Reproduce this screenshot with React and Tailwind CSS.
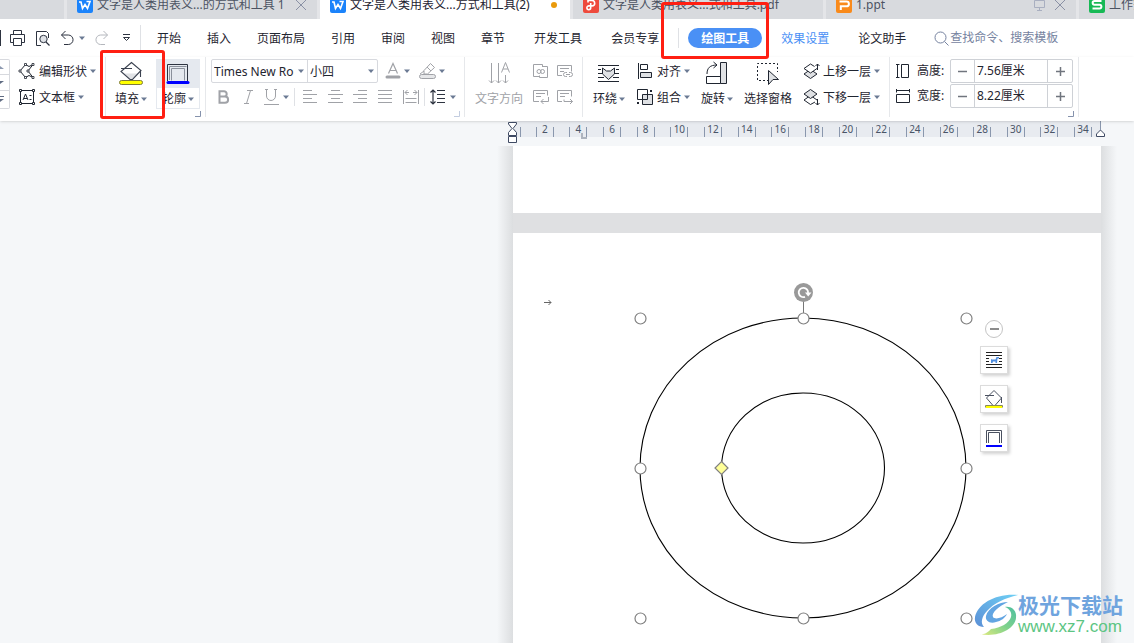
import React from "react";

const tabs = [
  { kind: "w", title: "文字是人类用表义...的方式和工具 1", close: true },
  { kind: "w", title: "文字是人类用表义...方式和工具(2)", active: true },
  { kind: "pdf", title: "文字是人类用表义...式和工具.pdf" },
  { kind: "ppt", title: "1.ppt", close: true, screen: true },
  { kind: "s", title: "工作簿1" },
];

const menus = ["开始", "插入", "页面布局", "引用", "审阅", "视图", "章节"];
const rulerMarks = [2, 4, 6, 8, 10, 12, 14, 16, 18, 20, 22, 24, 26, 28, 30, 32, 34];

function Svg({ w = 16, h = 16, className = "", children }) {
  return (
    <svg
      width={w}
      height={h}
      viewBox={`0 0 ${w} ${h}`}
      fill="none"
      stroke="currentColor"
      aria-hidden="true"
      className={`shrink-0 overflow-visible ${className}`}
    >
      {children}
    </svg>
  );
}

function Caret() {
  return (
    <Svg w={6} h={4} className="text-[#6b7a94]">
      <path d="M0 0.500h6L3 4z" fill="currentColor" stroke="none" />
    </Svg>
  );
}

function FileIcon({ kind }) {
  if (kind === "w") {
    return (
      <Svg>
        <rect width="16" height="16" rx="2" fill="#1b83fb" stroke="none" />
        <path d="M2 5h2l1.500 6.500 2.500-4 2.500 4L13 4.500H9.500" stroke="#fff" strokeWidth="1.600" />
      </Svg>
    );
  }
  if (kind === "pdf") {
    return (
      <Svg>
        <rect width="16" height="16" rx="2" fill="#ee4a3d" stroke="none" />
        <path
          d="M5 5.500V3.500h4a2.700 2.700 0 0 1 0 5.400H5.800a1.900 1.900 0 1 0 1.900 1.900V6"
          stroke="#fff"
          strokeWidth="1.600"
        />
      </Svg>
    );
  }
  if (kind === "ppt") {
    return (
      <Svg>
        <rect width="16" height="16" rx="2" fill="#f98a1b" stroke="none" />
        <path d="M3.500 4.500h7a2.200 2.200 0 0 1 0 4.800H4.800V13" stroke="#fff" strokeWidth="2" />
      </Svg>
    );
  }
  return (
    <Svg>
      <rect width="16" height="16" rx="2" fill="#17b955" stroke="none" />
      <path d="M12.500 4H5.500a1.800 1.800 0 0 0 0 3.700h5a1.900 1.900 0 0 1 0 3.800H3.500" stroke="#fff" strokeWidth="2" />
    </Svg>
  );
}

function FillIcon() {
  return (
    <Svg w={24} h={24}>
      <path d="M4 12.500h15l-7 6.500z" fill="#e0e2e5" stroke="none" />
      <path d="M12.500 1.500L2 10.500l9 8h2.500L22 9.500zM2 7.500h11M21.500 9v7" stroke="#3b4250" strokeWidth="1.100" />
      <rect x="0.500" y="19.500" width="23" height="4" rx="2" fill="#ff0" stroke="#7d7a3a" />
    </Svg>
  );
}

function OutlineIcon() {
  return (
    <Svg w={24} h={24}>
      <path d="M1.500 19V2.500h20V19" stroke="#2d3340" />
      <path d="M5.500 18.500V6.500h13v12M3.500 18V4.500h17" stroke="#8a909b" />
      <path d="M2 20.500h20" stroke="#00f" strokeWidth="3" strokeLinecap="round" />
    </Svg>
  );
}

function BigButton({ icon, label, caret = true, className = "" }) {
  return (
    <button type="button" className={`flex flex-col items-center pt-1 ${className}`}>
      <span className="flex h-6 items-center justify-center">{icon}</span>
      <span className="flex h-7 items-center gap-[2px] whitespace-nowrap">
        {label}
        {caret && <Caret />}
      </span>
    </button>
  );
}

function SmallButton({ icon, label }) {
  return (
    <button type="button" className="flex h-[26px] items-center gap-[3px] whitespace-nowrap">
      {icon}
      <span className="pt-[2px]">{label}</span>
      <Caret />
    </button>
  );
}

function IconButton({ label, children, className = "" }) {
  return (
    <button type="button" aria-label={label} className={`flex h-[26px] items-center justify-center ${className}`}>
      {children}
    </button>
  );
}

function Group({ children, launcher, className = "" }) {
  return (
    <div className={`relative flex shrink-0 items-start border-r border-[#e6e8eb] ${className}`}>
      {children}
      {launcher && (
        <button type="button" aria-label="更多选项" className="absolute right-1 bottom-0">
          <Svg w={6} h={6} className={launcher}>
            <path d="M0 5.500h5.500V0" />
          </Svg>
        </button>
      )}
    </div>
  );
}

function TabBar() {
  return (
    <div className="flex h-[19px] items-end gap-[3px] overflow-hidden bg-[#e4e5e8] text-[#4c5362]">
      <div className="h-7 w-16 shrink-0 bg-[#d8dade]" />
      {tabs.map((tab) => (
        <div
          key={tab.title}
          className={`flex h-7 w-[250px] shrink-0 items-center gap-1 pr-[10px] pl-[10px] whitespace-nowrap ${
            tab.active ? "bg-white text-[#1c2230]" : "bg-[#d8dade]"
          }`}
        >
          <FileIcon kind={tab.kind} />
          <span className="grow">{tab.title}</span>
          {tab.active && <span className="mr-[3px] h-[6px] w-[6px] rounded-full bg-[#e99a0c]" />}
          {tab.screen && (
            <Svg w={12} h={12} className="mr-1 text-[#a9afc0]">
              <path d="M0.500 1.500h10v7h-10zM5.500 9v2M3 11.500h5" />
            </Svg>
          )}
          {tab.close && (
            <button type="button" aria-label="关闭">
              <Svg w={12} h={12} className="text-[#8a91a5]">
                <path d="M1 1l10 10M11 1L1 11" />
              </Svg>
            </button>
          )}
        </div>
      ))}
    </div>
  );
}

function QuickAccess() {
  return (
    <div className="flex w-[141px] shrink-0 items-center border-r border-[#dfe1e5] text-[#2d3340]">
      <span className="h-4 w-px bg-[#2d3340]" />
      <IconButton label="打印" className="ml-2">
        <Svg w={17} h={16}>
          <path d="M4.500 4.500v-4h8v4M4 12.500H1.500v-8h14v8H13M4.500 8.500h8v7h-8z" />
        </Svg>
      </IconButton>
      <IconButton label="打印预览" className="ml-[9px]">
        <Svg w={16} h={17}>
          <path d="M6 15.500H1.500v-14h10l2 2V8" />
          <circle cx="8.500" cy="9" r="3.700" fill="#dfe2e7" />
          <path d="M11 12l3.500 3.500" strokeWidth="1.200" />
        </Svg>
      </IconButton>
      <IconButton label="撤销" className="ml-[9px] gap-[5px]">
        <Svg w={14} h={16}>
          <path d="M5.500 1L1.500 5l4 4M1.500 5h6.800a4.700 4.700 0 0 1 0 9.500H4" />
        </Svg>
        <Caret />
      </IconButton>
      <IconButton label="恢复" className="ml-[10px] text-[#b4b7bd]">
        <Svg w={14} h={16}>
          <path d="M8.500 1l4 4-4 4M12.500 5H5.700a4.700 4.700 0 0 0 0 9.500H10" />
        </Svg>
      </IconButton>
      <IconButton label="自定义" className="ml-[13px]">
        <Svg w={9} h={8}>
          <path d="M1 0.500h7M1.500 3.500h6l-3 3z" />
        </Svg>
      </IconButton>
    </div>
  );
}

function MenuBar() {
  return (
    <div className="flex h-[38px] items-center overflow-hidden whitespace-nowrap">
      <div className="flex h-[22px] items-center">
        <QuickAccess />
      </div>
      <nav className="flex items-center pl-[3px]">
        {menus.map((name) => (
          <button key={name} type="button" className="px-[13px] pt-[2px]">
            {name}
          </button>
        ))}
        <button type="button" className="px-4 pt-[2px]">
          开发工具
        </button>
        <button type="button" className="px-[13px] pt-[2px]">
          会员专享
        </button>
        <span className="ml-[6px] h-5 w-px bg-[#dfe1e5]" />
        <button type="button" className="ml-[9px] h-5 rounded-full bg-[#4a90f5] px-[13px] pt-px font-bold text-white">
          绘图工具
        </button>
        <button type="button" className="ml-[6px] px-[13px] pt-[2px] text-[#4a90f5]">
          效果设置
        </button>
        <button type="button" className="ml-[3px] px-[13px] pt-[2px]">
          论文助手
        </button>
      </nav>
      <label className="ml-[15px] flex items-center gap-px text-[#7683a0]">
        <Svg w={15} h={15}>
          <circle cx="6.500" cy="6.500" r="5.500" />
          <path d="M10.500 10.500l4 4" />
        </Svg>
        <input
          type="text"
          aria-label="查找命令、搜索模板"
          placeholder="查找命令、搜索模板"
          className="w-32 outline-none placeholder:text-[#7683a0]"
        />
      </label>
    </div>
  );
}

function AlignIcon({ d }) {
  return (
    <Svg w={15} h={14}>
      <path d={d} />
    </Svg>
  );
}

function SizeField({ id, label, icon, value }) {
  return (
    <div className="flex h-6 items-center">
      {icon}
      <label htmlFor={id} className="w-10 pl-[7px] whitespace-nowrap">
        {label}:
      </label>
      <div className="flex h-6 w-[123px] divide-x divide-[#ced1d6] rounded-[2px] border border-[#ced1d6]">
        <button type="button" aria-label="减小" className="flex w-6 shrink-0 items-center justify-center text-[#70757e]">
          <Svg w={9} h={9}>
            <path d="M0 4.500h9" strokeWidth="1.500" />
          </Svg>
        </button>
        <input id={id} type="text" defaultValue={value} className="w-0 min-w-0 grow pl-[2px] outline-none" />
        <button type="button" aria-label="增大" className="flex w-6 shrink-0 items-center justify-center text-[#70757e]">
          <Svg w={9} h={9}>
            <path d="M0 4.500h9M4.500 0v9" strokeWidth="1.500" />
          </Svg>
        </button>
      </div>
    </div>
  );
}

function FontGroup() {
  return (
    <Group launcher="text-[#c3cde0]" className="w-[259px] flex-col pt-px pl-[5px]">
      <div className="flex h-[26px] items-center">
        <div className="flex h-6 w-[167px] items-center divide-x divide-[#d7d9de] rounded-[2px] border border-[#d7d9de]">
          <div className="flex h-full w-24 items-center gap-[4px]">
            <select aria-label="字体" className="w-[82px] appearance-none overflow-hidden pt-px pl-[2px] outline-none">
              <option>Times New Roman</option>
            </select>
            <Caret />
          </div>
          <div className="flex h-full grow items-center">
            <select aria-label="字号" className="w-[60px] appearance-none pt-px pl-[2px] outline-none">
              <option>小四</option>
            </select>
            <Caret />
          </div>
        </div>
        <IconButton label="字体颜色" className="ml-2 gap-[4px] text-[#a0a2a7]">
          <Svg w={14} h={16}>
            <path d="M2.500 10.500L7 0.500l4.500 10M4 7.500h6" strokeWidth="1.200" />
            <path d="M1 14h12" strokeWidth="3" strokeLinecap="round" />
          </Svg>
          <Caret />
        </IconButton>
        <IconButton label="突出显示" className="ml-[9px] gap-[3px] text-[#a0a2a7]">
          <Svg w={17} h={16}>
            <path d="M5 7.500L11.500 0.500l4 4-7 6.500H5zM8 4l4 4M1 11l4-3" />
            <rect x="0.500" y="11.500" width="16" height="4" rx="2" fill="#e6e7e9" />
          </Svg>
          <Caret />
        </IconButton>
      </div>
      <div className="flex h-[26px] items-center text-[#a0a2a7]">
        <IconButton label="加粗" className="w-[25px]">
          <Svg w={13} h={14}>
            <path d="M2.500 1v12M1.500 1.200h5.500a2.700 2.700 0 0 1 0 5.400H3M7 6.600h1a3.100 3.100 0 0 1 0 6.200H1.500" strokeWidth="2" />
          </Svg>
        </IconButton>
        <IconButton label="倾斜" className="w-[25px]">
          <Svg w={9} h={14}>
            <path d="M3 0.500h6M0 13.500h5M6.500 0.500l-4 13" />
          </Svg>
        </IconButton>
        <IconButton label="下划线" className="w-[30px] gap-1">
          <Svg w={16} h={16}>
            <path d="M2 0.500h3M11 0.500h3M3.500 0.500V7a4.500 4.500 0 0 0 9 0V0.500M1 15.500h15" />
          </Svg>
          <Caret />
        </IconButton>
        <span className="mx-[3px] h-[18px] w-px bg-[#dfe1e5]" />
        <IconButton label="左对齐" className="w-[25px]">
          <AlignIcon d="M0 0.500h9M0 4.500h14M0 8.500h9M0 12.500h14" />
        </IconButton>
        <IconButton label="居中" className="w-[25px]">
          <AlignIcon d="M3 0.500h9M0 4.500h15M3 8.500h9M0 12.500h15" />
        </IconButton>
        <IconButton label="右对齐" className="w-[25px]">
          <AlignIcon d="M5 0.500h9M0 4.500h14M5 8.500h9M0 12.500h14" />
        </IconButton>
        <IconButton label="两端对齐" className="w-[25px]">
          <AlignIcon d="M0 0.500h14M0 4.500h14M0 8.500h14M0 12.500h14" />
        </IconButton>
        <IconButton label="分散对齐" className="w-[25px]">
          <Svg w={16} h={14}>
            <path d="M0.500 0v14M15.500 0v14M2 2.500h4M10 2.500h4M4.500 0L2 2.500 4.500 5M11.500 0L14 2.500 11.500 5M2.500 8.500h11M2.500 12.500h11" />
          </Svg>
        </IconButton>
        <span className="ml-px h-[18px] w-px bg-[#dfe1e5]" />
        <IconButton label="行距" className="ml-[5px] gap-1 text-[#2d3340]">
          <Svg w={16} h={16}>
            <path d="M3 1v14M0.500 3.500L3 1l2.500 2.500M0.500 12.500L3 15l2.500-2.500" strokeWidth="1.200" />
            <path d="M7 1.500h8M7 5.500h8M7 9.500h8M7 13.500h8" />
          </Svg>
          <Caret />
        </IconButton>
      </div>
    </Group>
  );
}

function Ribbon() {
  return (
    <div className="relative z-10 flex h-16 bg-white pb-1 text-[#1f2530] shadow-sm">
      <Group className="w-[106px]">
        <div className="mt-[2px] flex h-[50px] w-[10px] shrink-0 flex-col divide-y divide-[#d7d9de] rounded-r-[2px] border border-l-0 border-[#d7d9de]">
          <button type="button" aria-label="上一行" className="flex grow items-center">
            <Svg w={4} h={3} className="text-[#8c99b0]">
              <path d="M0 0l4 3H0z" fill="currentColor" stroke="none" />
            </Svg>
          </button>
          <button type="button" aria-label="下一行" className="flex grow items-center">
            <Svg w={4} h={3} className="text-[#5f6b82]">
              <path d="M0 0h4L0 3z" fill="currentColor" stroke="none" />
            </Svg>
          </button>
          <button type="button" aria-label="展开" className="flex grow items-center">
            <Svg w={4} h={6} className="text-[#5f6b82]">
              <path d="M0 0.500h4" />
              <path d="M0 3h4L0 6z" fill="currentColor" stroke="none" />
            </Svg>
          </button>
        </div>
        <div className="flex flex-col pt-px pl-[9px]">
          <SmallButton
            label="编辑形状"
            icon={
              <Svg w={17} h={16}>
                <path d="M6.500 1.500L1 8l5.500 6.500L10 12.500l4 2L9 8l5-6.500-4 2z" />
                <path d="M5.500 0.500h2v2h-2zM13 0.500h2v2h-2zM0 7h2v2H0zM8 7h2v2H8zM5.500 13.500h2v2h-2zM13 13.500h2v2h-2z" fill="#fff" strokeWidth="0.800" />
              </Svg>
            }
          />
          <SmallButton
            label="文本框"
            icon={
              <Svg w={17} h={16}>
                <path d="M1.500 1.500h13v13h-13z" />
                <path d="M0.500 0.500h2v2h-2zM13.500 0.500h2v2h-2zM0.500 13.500h2v2h-2zM13.500 13.500h2v2h-2z" fill="#fff" />
                <path d="M4 11L6.500 5 9 11M5 9.500h3M10.500 6.500h2M10.500 10.500h2" />
              </Svg>
            }
          />
        </div>
      </Group>

      <Group launcher="text-[#8592ac]" className="w-[100px]">
        <BigButton icon={<FillIcon />} label="填充" className="w-[50px]" />
        <button type="button" className="mt-[2px] flex h-[50px] w-11 flex-col items-center border border-[#e5e9ef] bg-[#e5e9ef]">
          <span className="flex h-7 items-center">
            <OutlineIcon />
          </span>
          <span className="flex w-full grow items-center justify-center gap-[2px] bg-white pt-px">
            轮廓
            <Caret />
          </span>
        </button>
      </Group>

      <FontGroup />

      <Group className="w-[118px] pl-[10px] text-[#a0a2a7]">
        <BigButton
          label="文字方向"
          caret={false}
          icon={
            <Svg w={22} h={24}>
              <path d="M3.500 2v20M1 19.500l2.500 2.500 2.500-2.500M10.500 2v20M8 19.500l2.500 2.500 2.500-2.500M17.500 14v8M15 19.500l2.500 2.500 2.500-2.500M13.500 11.500L17.500 1.500 21.500 11.500M15 8h5" />
            </Svg>
          }
        />
        <div className="grid grid-cols-2 gap-x-2 pt-px pl-[10px]">
          <IconButton label="创建链接">
            <Svg>
              <path d="M6 13.500H0.500v-12h9v2M9 3.500h5.500v11h-8v-2" />
              <circle cx="6" cy="8.500" r="2" />
              <circle cx="9.500" cy="8.500" r="2" />
            </Svg>
          </IconButton>
          <IconButton label="断开链接">
            <Svg>
              <path d="M5 12.500H0.500v-10h14v6M3 5.500h9M3 8.500h4" />
              <path d="M10 9.500H8.500a2 2 0 0 0 0 4H10M12 9.500h1.500a2 2 0 0 1 0 4H12M9 11.500h4" />
            </Svg>
          </IconButton>
          <IconButton label="上一文本框">
            <Svg>
              <path d="M6 12.500H0.500v-11h14v5M3 4.500h9M3 7.500h5M15.500 8v4.500H8M10.500 10L8 12.500l2.500 2.500" />
            </Svg>
          </IconButton>
          <IconButton label="下一文本框">
            <Svg>
              <path d="M5 12.500H0.500v-11h14v6M3 4.500h9M3 7.500h5M7 10.500v2h8.500M13 10l2.500 2.500L13 15" />
            </Svg>
          </IconButton>
        </div>
      </Group>

      <Group className="w-[307px] gap-[11px] pl-[10px]">
        <BigButton
          label="环绕"
          icon={
            <Svg w={22} h={22}>
              <path d="M0 3.500h21M0 19.500h21M0 7.500h3M18 7.500h3M0 11.500h4M17 11.500h4M0 15.500h6M15 15.500h6" />
              <path d="M4.500 6l4 3h4l4-3v6L10.500 17.500 4.500 12z" fill="#dfe1e4" />
            </Svg>
          }
        />
        <div className="flex flex-col pt-px">
          <SmallButton
            label="对齐"
            icon={
              <Svg w={18} h={16}>
                <path d="M2.500 0v16M4.500 1.500h7v5h-7z" />
                <path d="M4.500 9.500h11v5h-11z" fill="#dfe1e4" />
              </Svg>
            }
          />
          <SmallButton
            label="组合"
            icon={
              <Svg w={18} h={16}>
                <path d="M6.500 5.500h10v10h-10z" fill="#dfe1e4" />
                <path d="M1.500 0.500h10v10h-10z" />
                <path d="M14 1h2v2h-2zM1 13h2v2H1z" fill="currentColor" stroke="none" />
              </Svg>
            }
          />
        </div>
        <BigButton
          label="旋转"
          icon={
            <Svg w={24} h={24}>
              <path d="M15.500 1.500h6v21h-6z" fill="#dfe1e4" />
              <path d="M15.500 15.500h-14v7h14M2 13C2 7 5 4 12 4M8.500 1l3.500 3-3.500 3" />
            </Svg>
          }
        />
        <BigButton
          label="选择窗格"
          caret={false}
          icon={
            <Svg w={24} h={24}>
              <path d="M13 19.500H1.500v-17h20V11" strokeDasharray="2 2" />
              <path d="M12.500 9.500l10 9h-5.500l-4.500 5z" fill="#dfe1e4" />
            </Svg>
          }
        />
        <div className="flex flex-col pt-px">
          <SmallButton
            label="上移一层"
            icon={
              <Svg w={17} h={17}>
                <path d="M7.500 6.500l6.500 4.500-6.500 4.500L1 11z" fill="#dfe1e4" />
                <path d="M11.500 3.500l-4-2.500L1 5.500 7.500 10 14 5.500" fill="#fff" />
                <path d="M14.500 7V1M12.500 3l2-2 2 2" />
              </Svg>
            }
          />
          <SmallButton
            label="下移一层"
            icon={
              <Svg w={17} h={17}>
                <path d="M12 13l-4.500 2.500L1 11l6.500-4.500L14 11" fill="#fff" />
                <path d="M7.500 0.500L14 5 7.500 9.500 1 5z" fill="#dfe1e4" />
                <path d="M14.500 10v6M12.500 14l2 2 2-2" />
              </Svg>
            }
          />
        </div>
      </Group>

      <Group launcher="text-[#8592ac]" className="w-[189px] pl-[6px]">
        <div className="flex flex-col gap-px pt-[2px]">
          <SizeField
            id="shape-height"
            label="高度"
            value="7.56厘米"
            icon={
              <Svg w={14} h={14}>
                <path d="M1.500 0.500v13M0 0.500h3.500M0 13.500h3.500M5.500 0.500h7v13h-7z" />
              </Svg>
            }
          />
          <SizeField
            id="shape-width"
            label="宽度"
            value="8.22厘米"
            icon={
              <Svg w={14} h={14}>
                <path d="M0.500 1.500h13M0.500 0v3.500M13.500 0v3.500M0.500 5.500h13v8h-13z" />
              </Svg>
            }
          />
        </div>
      </Group>
    </div>
  );
}

function Ruler() {
  return (
    <div className="flex h-[25px] justify-end bg-[#f5f7f9] pr-[34px]">
      <div className="relative flex h-4 w-[588px] bg-[#e8ebf0] text-[10px] leading-4 text-[#4a5568]">
        <div className="flex w-4 shrink-0 items-end justify-center">
          <span className="h-[10px] w-px bg-[#8a97ad]" />
        </div>
        {rulerMarks.map((n) => (
          <div key={n} className="flex min-w-0 flex-1 items-end justify-center">
            <span className="h-[10px] w-px bg-[#8a97ad]" />
            <span className="w-4 text-center">{n}</span>
            <span className="h-[10px] w-px bg-[#8a97ad]" />
          </div>
        ))}
        <Svg w={10} h={22} className="absolute top-0 -left-[4px] z-20 text-[#3f4a63]">
          <path d="M0.500 1.500h8V3L5 7.500 8.500 11.500v3h-8v-3L4 7.500 0.500 3z" fill="#fff" />
          <path d="M0.500 15.500h8v6h-8z" fill="#fff" />
        </Svg>
        <Svg w={7} h={6} className="absolute top-3 left-[69px] text-[#aeb4be]">
          <path d="M1 0v5h5" strokeWidth="2" />
        </Svg>
        <Svg w={10} h={16} className="absolute top-0 -right-[6px] text-[#3f4a63]">
          <path d="M4.500 0v9" stroke="#8a97ad" />
          <path d="M0.500 15.500v-2.500L4.500 9l4 4v2.500z" fill="#fff" />
        </Svg>
      </div>
    </div>
  );
}

function Drawing() {
  const handles = [
    [11.5, 31.5],
    [174.5, 31.5],
    [337.5, 31.5],
    [11.5, 181.5],
    [337.5, 181.5],
    [11.5, 331.5],
    [174.5, 331.5],
    [337.5, 331.5],
  ];
  return (
    <Svg w={348} h={340} className="absolute top-[54px] left-[116px]">
      <ellipse cx="174" cy="181" rx="163" ry="150" stroke="#000" strokeWidth="1.100" />
      <ellipse cx="174" cy="181" rx="81.500" ry="75" stroke="#000" strokeWidth="1.100" />
      <path d="M174.500 14v12" stroke="#777" />
      {handles.map(([x, y]) => (
        <circle key={`${x}-${y}`} cx={x} cy={y} r="5.500" fill="#fff" stroke="#808080" strokeWidth="1.200" />
      ))}
      <path d="M92.500 174.500l6.500 6.500-6.500 6.500-6.500-6.500z" fill="#ff9" stroke="#808080" strokeWidth="1.200" />
      <circle cx="174.500" cy="5.500" r="9.500" fill="#999" stroke="none" />
      <path d="M179 6.500a4.700 4.700 0 1 0-3 3.400" stroke="#fff" strokeWidth="1.800" />
      <path d="M176 5.500h6.500l-3.300 4z" fill="#fff" stroke="none" />
    </Svg>
  );
}

function FloatButton({ label, children }) {
  return (
    <button
      type="button"
      aria-label={label}
      className="flex h-7 w-7 items-center justify-center border border-[#dcdcdc] bg-white shadow-[2px_2px_3px_rgba(0,0,0,0.18)]"
    >
      {children}
    </button>
  );
}

function FloatToolbar() {
  return (
    <div className="absolute top-[87px] left-[467px] flex flex-col items-center gap-[11px]">
      <button
        type="button"
        aria-label="收起"
        className="-mb-[3px] flex h-[18px] w-[18px] items-center justify-center rounded-full border border-[#c4c4c4] bg-white text-[#8c8c8c]"
      >
        <Svg w={9} h={2}>
          <path d="M0 1h9" strokeWidth="2" />
        </Svg>
      </button>
      <FloatButton label="布局选项">
        <Svg w={16} h={18} className="text-[#222]">
          <path d="M0 1.500h16M0 4.500h16M0 7.500h3M13 7.500h3M0 10.500h3M13 10.500h3M0 13.500h16M0 16.500h16" />
          <path d="M5 8l1 .5h3.500L10.500 6H13v1.500h-1.500L11 12H9.500v-1.500H7L6.500 12H5z" fill="#4f8ee0" stroke="none" />
        </Svg>
      </FloatButton>
      <FloatButton label="填充颜色">
        <Svg w={18} h={18} className="text-[#4a5160]">
          <path d="M9 0.500L1.500 8 8 15.500h2L16.500 8zM0 5.500h9M16.500 7v6" />
          <path d="M0.500 17.500v-2h17v2" stroke="#8a8a5a" />
          <path d="M1 17h16" stroke="#ff0" strokeWidth="2" />
        </Svg>
      </FloatButton>
      <FloatButton label="轮廓颜色">
        <Svg w={18} h={18} className="text-[#4a5160]">
          <path d="M1.500 14V1.500h15V14M3.500 14V3.500h11V14" />
          <path d="M1 17h16" stroke="#00f" strokeWidth="2" />
        </Svg>
      </FloatButton>
    </div>
  );
}

function Watermark() {
  return (
    <div className="absolute right-[11px] bottom-[6px] flex items-center font-bold">
      <Svg w={43} h={42}>
        <defs>
          <linearGradient id="swooshBlue" x1="1" y1="0" x2="0" y2="1">
            <stop offset="0" stopColor="#6fd0f5" />
            <stop offset="1" stopColor="#5b8fd6" />
          </linearGradient>
          <linearGradient id="swooshGreen" x1="1" y1="0" x2="0" y2="1">
            <stop offset="0" stopColor="#4fbfa0" />
            <stop offset="0.500" stopColor="#7fd28c" />
            <stop offset="1" stopColor="#e0ea7e" />
          </linearGradient>
        </defs>
        <path
          d="M43 1C22-1 3 9 0 23c-1 6 3 10 9 10-4-4-2-11 3-16C19 9 30 4 43 1z"
          fill="url(#swooshBlue)"
          stroke="none"
        />
        <path
          d="M33 8c-9 0-20 6-22 14-1 5 4 8 10 6 5-1 9-4 11-8-5 4-12 6-14 3-2-4 6-11 15-15z"
          fill="#62a5e2"
          stroke="none"
        />
        <path
          d="M30 13c7-1 12 4 11 11-1 11-19 20-36 16 5 1 8-2 11-5 10-1 18-6 20-12 1-4-1-8-6-10z"
          fill="url(#swooshGreen)"
          stroke="none"
        />
      </Svg>
      <div className="flex flex-col">
        <span className="text-[21px] leading-6 text-[#6fa4de]">极光下载站</span>
        <span className="font-['Liberation_Sans'] text-[17px] leading-5 font-normal text-[#5cc583]">www.xz7.com</span>
      </div>
    </div>
  );
}

function Workspace() {
  return (
    <div className="flex grow justify-end overflow-hidden bg-[#f5f7f9] pr-[17px]">
      <div className="w-4 shrink-0 bg-linear-to-l from-[#dcdee0] to-[#f5f7f9]" />
      <div className="flex w-[588px] shrink-0 flex-col gap-5 bg-[#dfe0e2]">
        <div className="h-[67px] bg-white" />
        <div className="relative grow bg-white">
          <Svg w={8} h={7} className="absolute top-[66px] left-[31px] text-[#666]">
            <path d="M0 3.500h7M4.500 1L7 3.500 4.500 6" />
          </Svg>
          <Drawing />
          <FloatToolbar />
        </div>
      </div>
      <div className="w-4 shrink-0 bg-linear-to-r from-[#dcdee0] to-[#f5f7f9]" />
    </div>
  );
}

function App() {
  return (
    <div className="relative flex min-h-screen flex-col overflow-hidden bg-white font-['Noto_Sans','Noto_Sans_CJK_SC',sans-serif] text-[12px] leading-4 text-[#1f2530]">
      <TabBar />
      <MenuBar />
      <Ribbon />
      <Ruler />
      <Workspace />
      <Watermark />
      <div className="pointer-events-none absolute top-[50px] left-[100px] z-20 h-[69px] w-[65px] rounded-[3px] border-3 border-[#ff1f12]" />
      <div className="pointer-events-none absolute top-[2px] left-[661px] z-20 h-[57px] w-[108px] rounded-[3px] border-3 border-[#ff1f12]" />
    </div>
  );
}

export default App;
